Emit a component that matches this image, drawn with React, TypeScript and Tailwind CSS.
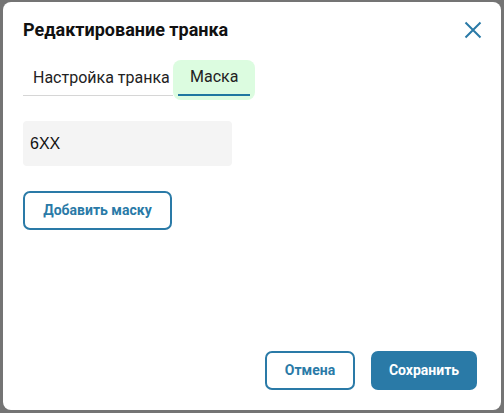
import React from "react";

export default function App() {
  return (
    <div
      className="w-[504px] h-[413px] bg-[#747474] pt-[2px] pl-[3px] pr-[3px] pb-[3px] flex"
      style={{ fontFamily: "Roboto, 'Noto Sans', sans-serif" }}
    >
      <div className="flex-1 bg-white rounded-[8px] flex flex-col px-5 pt-[16px] pb-5">
        {/* Header */}
        <div className="flex items-start justify-between h-[24px]">
          <h2 className="text-[18px] leading-[24px] font-bold text-[#111]">Редактирование транка</h2>
          <button className="w-[24px] h-[24px] flex items-center justify-center -mr-[4px] mt-[0px]" aria-label="close">
            <svg width="18" height="18" viewBox="0 0 18 18" fill="none">
              <path d="M1.5 1.5 L16.5 16.5 M16.5 1.5 L1.5 16.5" stroke="#2a7aa7" strokeWidth="2" />
            </svg>
          </button>
        </div>

        {/* Tabs */}
        <div className="flex items-start mt-[18px]">
          <div className="w-[150px] h-[36px] border-b border-[#d6d6d6] pl-[10px] flex items-center text-[16px] leading-[24px] text-[#222]">
            Настройка транка
          </div>
          <div className="bg-[#dcfce0] rounded-[8px] px-[5px] h-[40px]">
            <div className="h-[36px] border-b-2 border-[#1f77a0] px-[12px] flex items-center text-[16px] leading-[24px] text-[#222]">
              Маска
            </div>
          </div>
        </div>

        {/* Input */}
        <div className="mt-[21px] w-[209px] h-[45px] bg-[#f4f4f4] rounded-[4px] flex items-center pl-[7px] text-[16px] text-[#111]" style={{ fontFamily: "'Liberation Sans', Arial, sans-serif" }}>
          6XX
        </div>

        {/* Add mask */}
        <div className="mt-[25px]">
          <button className="w-[149px] h-[39px] border-2 border-[#2a7aa7] rounded-[7px] text-[14px] font-bold text-[#2a7aa7] flex items-center justify-center">
            Добавить маску
          </button>
        </div>

        <div className="flex-1" />

        {/* Footer */}
        <div className="flex justify-end gap-[16px] pr-[4px]">
          <button className="w-[90px] h-[39px] border-2 border-[#2a7aa7] rounded-[7px] text-[14px] font-bold text-[#2a7aa7] flex items-center justify-center">
            Отмена
          </button>
          <button className="w-[106px] h-[39px] bg-[#2a7aa7] rounded-[7px] text-[14px] font-bold text-white flex items-center justify-center">
            Сохранить
          </button>
        </div>
      </div>
    </div>
  );
}
